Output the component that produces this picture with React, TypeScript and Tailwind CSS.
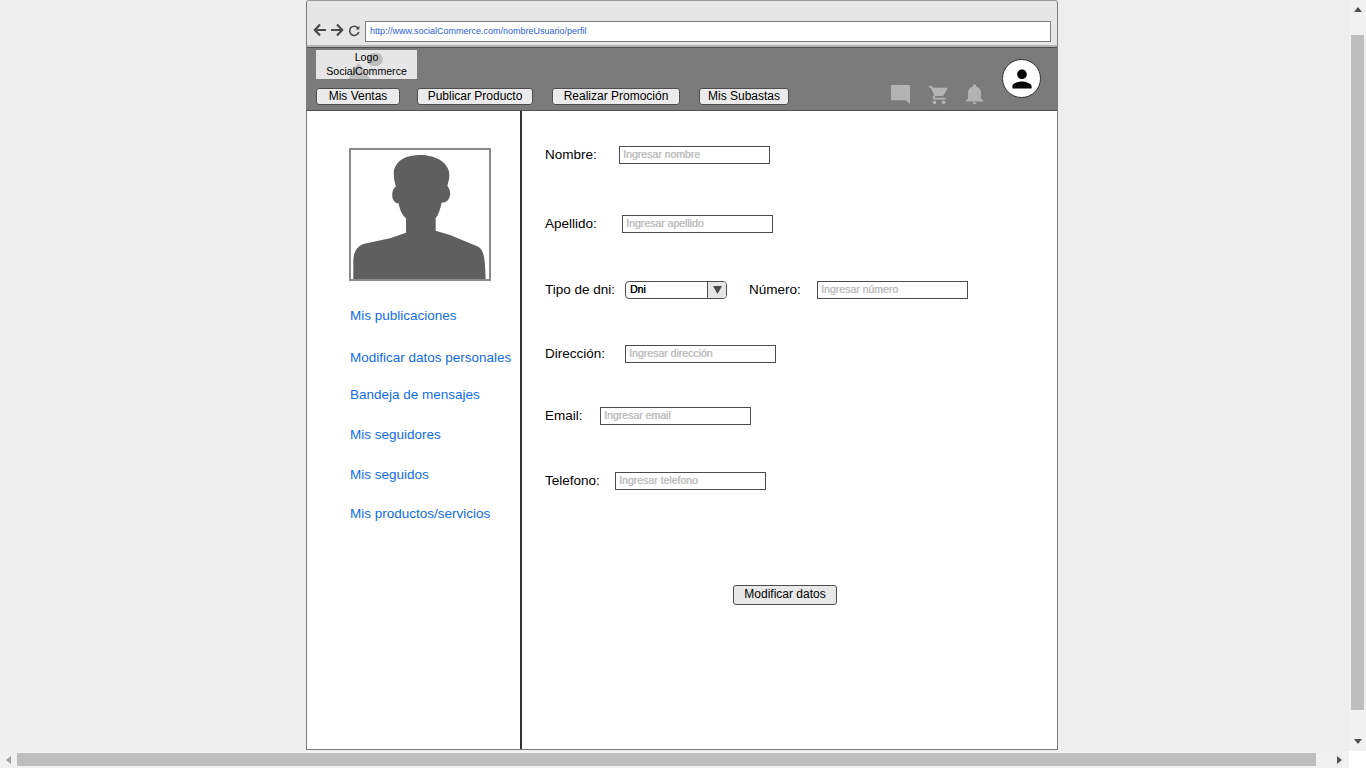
const font = { fontFamily: '"Liberation Sans", Arial, sans-serif' };

function NavButton({ label, className }: { label: string; className: string }) {
  return (
    <button className={`h-[17px] rounded-[3px] border border-[#4d4d4d] bg-[#ebebeb] text-[12px] leading-[15px] text-black ${className}`}>
      {label}
    </button>
  );
}

function SideLink({ label, className }: { label: string; className: string }) {
  return <div className={`h-5 text-[13.5px] leading-5 text-[#0f6ee6] ${className}`}>{label}</div>;
}

function TextField({ placeholder, className = "" }: { placeholder: string; className?: string }) {
  return (
    <div className={`h-[18px] w-[151px] border border-[#4d4d4d] bg-white pl-[3px] text-[10.5px] font-normal leading-[15px] text-[#c0c0c0] [text-shadow:0.4px_0_0_#c0c0c0] ${className}`}>
      {placeholder}
    </div>
  );
}

function Label({ text, className }: { text: string; className: string }) {
  return <div className={`shrink-0 text-[13.5px] leading-[18px] text-black ${className}`}>{text}</div>;
}

function Row({ className, children }: { className: string; children: React.ReactNode }) {
  return <div className={`flex h-[18px] items-center ${className}`}>{children}</div>;
}

export default function App() {
  return (
    <div style={font} className="flex h-[768px] w-[1366px] flex-col overflow-hidden bg-[#eeeeee]">
      <div className="flex h-[751px]">
        <div className="flex-1 pl-[306px]">
          <div className="flex h-[750px] w-[752px] flex-col overflow-hidden rounded-t-[3px] border border-[#7a7a7a] border-t-[#9a9a9a] bg-white">
            {/* browser chrome */}
            <div className="flex h-[46px] shrink-0 items-end border-b-2 border-[#b4b4b4] bg-[#e6e6e6] pb-[3px] pl-[6px] pr-[6px]">
              <svg width="14" height="14" viewBox="0 0 14 14" className="mb-[5px] mr-[3px]" fill="none" stroke="#4a4a4a" strokeWidth="2.2">
                <path d="M13 7H2M7 1.500L1.800 7L7 12.500" />
              </svg>
              <svg width="14" height="14" viewBox="0 0 14 14" className="mb-[5px] mr-[4px]" fill="none" stroke="#4a4a4a" strokeWidth="2.2">
                <path d="M1 7H12M7 1.500L12.200 7L7 12.500" />
              </svg>
              <svg width="12" height="12" viewBox="0 0 12 12" className="mb-[5px] mr-[5px]" fill="none" stroke="#4a4a4a" strokeWidth="1.600">
                <path d="M10 3.200A4.600 4.600 0 1 0 10.700 7" />
                <path d="M11.400 0.800V4.600H7.600Z" fill="#4a4a4a" stroke="none" />
              </svg>
              <div className="h-[21px] flex-1 border border-[#7d7d7d] bg-white pl-[4px] text-[9px] leading-[19px] text-[#2a63d8]">
                http://www.socialCommerce.com/nombreUsuario/perfil
              </div>
            </div>
            {/* header */}
            <div className="relative h-[64px] shrink-0 border-y border-[#4f4f4f] bg-[#7b7b7b] pl-[9px]">
              <div className="relative mt-[2px] h-[29px] w-[101px] overflow-hidden bg-[#e6e6e6] text-center text-[10.600px] leading-[14px] text-black">
                <div className="absolute left-[51px] top-[3px] h-[13px] w-[16px] rounded-full bg-[#bdbdbd]" />
                <svg className="absolute left-[32px] top-[7px]" width="30" height="22" viewBox="0 0 30 22">
                  <path d="M0 22L10 6L16 12L22 22Z" fill="#bdbdbd" />
                </svg>
                <div className="relative">Logo<br />SocialCommerce</div>
              </div>
              <div className="mt-[9px] flex">
                <NavButton label="Mis Ventas" className="w-[84px]" />
                <NavButton label="Publicar Producto" className="ml-[17px] w-[116px]" />
                <NavButton label="Realizar Promoción" className="ml-[19px] w-[128px]" />
                <NavButton label="Mis Subastas" className="ml-[19px] w-[90px]" />
              </div>
              <svg className="absolute left-[583px] top-[36px]" width="21" height="21" viewBox="0 0 22 22">
                <path d="M2 1H20A1 1 0 0 1 21 2V21L16.500 17H2A1 1 0 0 1 1 16V2A1 1 0 0 1 2 1Z" fill="#b3b3b3" />
              </svg>
              <svg className="absolute left-[621px] top-[36px]" width="22" height="22" viewBox="0 0 24 24">
                <path fill="#b3b3b3" d="M7 18c-1.100 0-1.990.900-1.990 2S5.900 22 7 22s2-.900 2-2-.900-2-2-2zM1 2v2h2l3.600 7.590-1.350 2.450c-.160.280-.250.610-.250.960 0 1.100.900 2 2 2h12v-2H7.420c-.140 0-.250-.110-.250-.250l.030-.120.900-1.630h7.450c.750 0 1.410-.410 1.750-1.030l3.580-6.490A1 1 0 0 0 20.010 4H5.210l-.940-2H1zm16 16c-1.100 0-1.990.900-1.990 2s.890 2 1.990 2 2-.900 2-2-.900-2-2-2z" />
              </svg>
              <svg className="absolute left-[657px] top-[36px]" width="21" height="21" viewBox="0 0 24 24">
                <path fill="#b3b3b3" d="M12 23c1.300 0 2.300-1 2.300-2.200H9.700C9.700 22 10.700 23 12 23zm7.500-6.500V10.500c0-3.600-2-6.600-5.500-7.400V2.300C14 1.100 13.100.300 12 .300s-2 .800-2 2v.800c-3.500.800-5.500 3.800-5.500 7.400v6L2 19v1h20v-1l-2.500-2.500z" />
              </svg>
              <div className="absolute left-[695px] top-[11px] flex h-[39px] w-[39px] items-center justify-center rounded-full border border-[#333333] bg-white">
                <svg width="24" height="24" viewBox="0 0 24 24">
                  <path fill="#000000" d="M12 12c2.700 0 4.800-2.100 4.800-4.800S14.700 2.400 12 2.400 7.200 4.500 7.200 7.200 9.300 12 12 12zm0 2.400c-3.200 0-9.600 1.600-9.600 4.800v2.400h19.200v-2.400c0-3.200-6.400-4.800-9.600-4.800z" />
                </svg>
              </div>
            </div>
            {/* body */}
            <div className="flex flex-1">
              <aside className="h-full w-[215px] shrink-0 border-r-2 border-[#333333] pl-[42px] pt-[37px]">
                <div className="h-[133px] w-[142px] border-2 border-[#8a8a8a] bg-white">
                  <svg width="138" height="129" viewBox="33 30 414 387" className="block">
                    <path fill="#5f5f5f" d="M40 417L40 360C42 335 50 320 70 312L150 295L198 278L198 235C185 225 178 205 176 190C162 190 155 175 157 160C158 148 165 140 168 140C163 125 160 110 162 90C170 60 200 45 240 45C285 45 320 65 327 95C330 115 325 125 322 138C328 145 332 155 330 165C328 180 320 188 305 188C300 210 295 225 287 235L287 272L330 285L415 320C430 330 435 345 437 417Z" />
                  </svg>
                </div>
                <div className="pl-[1px]">
                  <SideLink label="Mis publicaciones" className="mt-[25px]" />
                  <SideLink label="Modificar datos personales" className="mt-[22px]" />
                  <SideLink label="Bandeja de mensajes" className="mt-[17px]" />
                  <SideLink label="Mis seguidores" className="mt-[20px]" />
                  <SideLink label="Mis seguidos" className="mt-[20px]" />
                  <SideLink label="Mis productos/servicios" className="mt-[19px]" />
                </div>
              </aside>
              <main className="flex-1 pl-[23px] pt-[35px]">
                <Row className="">
                  <Label text="Nombre:" className="w-[74px] pb-[1px]" />
                  <TextField placeholder="Ingresar nombre" />
                </Row>
                <Row className="mt-[51px]">
                  <Label text="Apellido:" className="w-[77px] pb-[1px]" />
                  <TextField placeholder="Ingresar apellido" />
                </Row>
                <Row className="mt-[48px]">
                  <Label text="Tipo de dni:" className="w-[80px] pb-[1px]" />
                  <div className="flex h-[18px] w-[102px] overflow-hidden rounded-[4px] border border-[#4d4d4d] bg-white">
                    <div className="flex-1 pl-[4px] text-[10.500px] font-normal leading-[15px] text-black [text-shadow:0.2px_0_0_#000]">Dni</div>
                    <div className="flex w-[19px] items-center justify-center border-l border-[#4d4d4d] bg-[#e6e6e6]">
                      <svg width="9" height="8" viewBox="0 0 9 8"><path d="M0 0H9L4.500 8Z" fill="#4a4a4a" /></svg>
                    </div>
                  </div>
                  <Label text="Número:" className="ml-[22px] w-[68px] pb-[1px]" />
                  <TextField placeholder="Ingresar número" />
                </Row>
                <Row className="mt-[46px]">
                  <Label text="Dirección:" className="w-[80px]" />
                  <TextField placeholder="Ingresar dirección" />
                </Row>
                <Row className="mt-[44px]">
                  <Label text="Email:" className="w-[55px] pb-[1px]" />
                  <TextField placeholder="Ingresar email" className="pl-[2px]" />
                </Row>
                <Row className="mt-[47px]">
                  <Label text="Telefono:" className="w-[70px]" />
                  <TextField placeholder="Ingresar telefono" className="pl-[2px]" />
                </Row>
                <button className="ml-[188px] mt-[95px] block h-[20px] w-[104px] rounded-[3px] border border-[#4d4d4d] bg-[#e8e8e8] pb-[2px] text-[12px] leading-[16px] text-black">
                  Modificar datos
                </button>
              </main>
            </div>
          </div>
        </div>
        {/* vertical scrollbar */}
        <div className="flex h-[751px] w-[17px] shrink-0 flex-col items-center bg-[#f1f1f1]">
          <svg className="mt-[7px]" width="8" height="5" viewBox="0 0 8 5"><path d="M4 0L8 5H0Z" fill="#505050" /></svg>
          <div className="mt-[23px] h-[675px] w-[13px] bg-[#bebebe]" />
          <svg className="mt-[29px]" width="8" height="5" viewBox="0 0 8 5"><path d="M0 0H8L4 5Z" fill="#505050" /></svg>
        </div>
      </div>
      {/* horizontal scrollbar */}
      <div className="flex h-[17px] shrink-0">
        <div className="flex w-[1349px] items-center bg-[#f1f1f1]">
          <svg className="ml-[6px]" width="5" height="8" viewBox="0 0 5 8"><path d="M5 0V8L0 4Z" fill="#a0a0a0" /></svg>
          <div className="ml-[6px] h-[13px] w-[1299px] bg-[#bebebe]" />
          <svg className="ml-[21px]" width="5" height="8" viewBox="0 0 5 8"><path d="M0 0V8L5 4Z" fill="#505050" /></svg>
        </div>
        <div className="flex-1 bg-white" />
      </div>
    </div>
  );
}
